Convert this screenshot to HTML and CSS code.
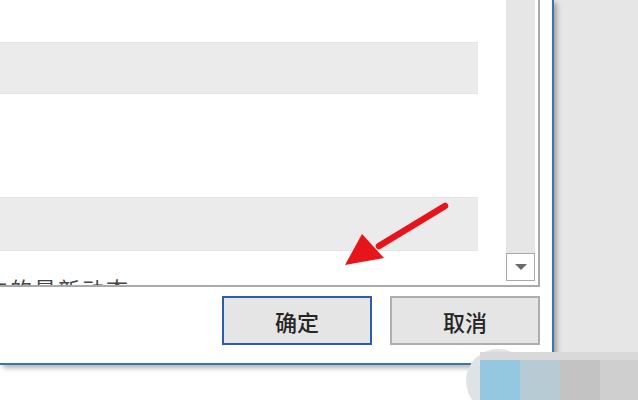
FILE: index.html
```html
<!DOCTYPE html>
<html lang="zh-CN">
<head>
    <meta charset="UTF-8">
    <title>确定</title>
    <link rel="stylesheet" href="styles.css">
</head>
<body>
    <div class="screen">
        <div class="top">
            <div class="dialog">
                <div class="listbox">
                    <div class="list">
                        <div class="row"></div>
                        <div class="row bar"></div>
                        <div class="row tall"></div>
                        <div class="row bar second"></div>
                        <div class="row caption">中的最新动态</div>
                    </div>
                    <div class="scrollbar">
                        <div class="track"></div>
                        <div class="down-btn"><span class="tri"></span></div>
                    </div>
                </div>
                <div class="buttons">
                    <div class="btn primary">确定</div>
                    <div class="btn">取消</div>
                </div>
            </div>
            <div class="side"></div>
        </div>
        <div class="bottom"></div>

        <svg class="arrow" width="120" height="80" viewBox="0 0 120 80">
            <line x1="100" y1="7" x2="34" y2="47" stroke="#e8141b" stroke-width="6.5" stroke-linecap="round"/>
            <polygon points="0,66 17,35 39,59" fill="#e8141b"/>
        </svg>

        <div class="mosaic">
            <div class="blob"></div>
            <div class="tiles">
                <div class="tile t1"></div>
                <div class="tile t2"></div>
                <div class="tile t3"></div>
                <div class="tile t4"></div>
            </div>
        </div>
    </div>
</body>
</html>
```

FILE: styles.css
```css
body {
    margin: 0;
    font-family: "Noto Sans CJK SC", "Noto Sans", sans-serif;
    background-color: #ffffff;
}

.screen {
    position: relative;
    width: 638px;
    height: 400px;
    overflow: hidden;
}

.top {
    display: flex;
    height: 365px;
}

.dialog {
    width: 552px;
    height: 363px;
    background-color: #ffffff;
    border-right: 2px solid #3a74b4;
    border-bottom: 2px solid #3a74b4;
    box-shadow: 3px 3px 5px rgba(0, 0, 0, 0.3);
    position: relative;
    z-index: 1;
}

.listbox {
    display: flex;
    width: 538px;
    height: 285px;
    border-right: 2px solid #a9a9a9;
    border-bottom: 2px solid #a9a9a9;
    overflow: hidden;
}

.list {
    width: 506px;
}

.row {
    height: 42px;
}

.bar {
    width: 478px;
    height: 50px;
    background-color: #ebebeb;
    border-top: 1px solid #e3e3e3;
    border-bottom: 1px solid #e3e3e3;
}

.tall {
    height: 103px;
}

.second {
    height: 52px;
}

.caption {
    height: 30px;
    padding-top: 24px;
    margin-left: -14px;
    font-size: 22px;
    line-height: 26px;
    color: #444;
    letter-spacing: 2px;
}

.scrollbar {
    width: 29px;
    display: flex;
    flex-direction: column;
}

.track {
    height: 253px;
    background-color: #e6e6e6;
}

.down-btn {
    height: 26px;
    border: 1px solid #a8a8a8;
    background-color: #ffffff;
    display: flex;
    align-items: center;
    justify-content: center;
}

.tri {
    width: 0;
    height: 0;
    border-left: 6px solid transparent;
    border-right: 6px solid transparent;
    border-top: 6px solid #6a6a6a;
}

.buttons {
    display: flex;
    justify-content: flex-end;
    gap: 18px;
    width: 540px;
    padding-top: 9px;
}

.btn {
    width: 146px;
    height: 45px;
    border: 2px solid #adadad;
    background-color: #e5e5e5;
    font-size: 22px;
    font-weight: 500;
    color: #262626;
    display: flex;
    align-items: center;
    justify-content: center;
}

.btn.primary {
    border-color: #2b5ea6;
}

.side {
    flex: 1;
    background-color: #e6e6e6;
}

.bottom {
    height: 35px;
}

.arrow {
    position: absolute;
    left: 345px;
    top: 199px;
    z-index: 2;
}

.mosaic {
    position: absolute;
    left: 466px;
    top: 349px;
    width: 172px;
    height: 51px;
    z-index: 2;
}

.blob {
    position: absolute;
    left: 0;
    top: 0;
    width: 64px;
    height: 64px;
    border-radius: 50%;
    background-color: #dfe3e5;
}

.tiles {
    position: absolute;
    left: 14px;
    top: 3px;
    display: flex;
    background-color: #d9d9d9;
    padding-top: 8px;
}

.tile {
    width: 40px;
    height: 40px;
}

.t1 { background-color: #93c8e0; }
.t2 { background-color: #b6cbd3; }
.t3 { background-color: #c3c3c3; }
.t4 { background-color: #cfcfcf; width: 38px; }
```
